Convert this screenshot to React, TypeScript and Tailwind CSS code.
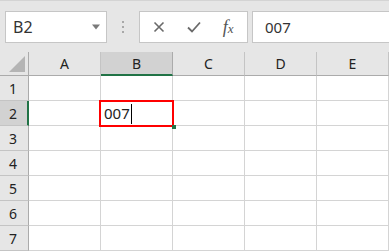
import { Fragment } from "react";

const cols = ["A", "B", "C", "D", "E"];
const rows = [1, 2, 3, 4, 5, 6, 7];

export default function App() {
  return (
    <div
      className="w-[389px] h-[252px] overflow-hidden bg-white"
      style={{ fontFamily: '"Noto Sans", "Liberation Sans", sans-serif' }}
    >
      {/* formula bar */}
      <div className="h-[52px] bg-[#e6e6e6] border-t border-[#d4d4d4] flex items-start pt-[10px] pl-[5px]">
        <div className="w-[102px] h-[32px] bg-white border border-[#c6c6c6] flex items-center justify-between pl-[7px] pr-[5px]">
          <span className="text-[16px] text-[#333]">B2</span>
          <svg width="10" height="6" viewBox="0 0 10 6">
            <path d="M1 0.5 L9 0.5 L5 5.5 Z" fill="#7a7a7a" />
          </svg>
        </div>
        <div className="w-[32px] h-[32px] flex flex-col items-center justify-center gap-[3px]">
          <span className="w-[2px] h-[2px] bg-[#a8a8a8]" />
          <span className="w-[2px] h-[2px] bg-[#a8a8a8]" />
          <span className="w-[2px] h-[2px] bg-[#a8a8a8]" />
        </div>
        <div className="w-[109px] h-[32px] bg-white border border-[#c6c6c6] flex items-center">
          <div className="w-[36px] flex justify-center pl-[2px]">
            <svg width="12" height="12" viewBox="0 0 12 12">
              <path d="M1.5 1.5 L10.5 10.5 M10.5 1.5 L1.5 10.5" stroke="#6a6a6a" strokeWidth="1.6" />
            </svg>
          </div>
          <div className="w-[36px] flex justify-center">
            <svg width="14" height="12" viewBox="0 0 14 12">
              <path d="M1 6.5 L5 10.5 L13 1.5" stroke="#6a6a6a" strokeWidth="1.8" fill="none" />
            </svg>
          </div>
          <div className="w-[36px] flex justify-center pr-[2px]">
            <span
              className="text-[18px] italic text-[#555] leading-none"
              style={{ fontFamily: '"Liberation Serif", serif' }}
            >
              f<span className="text-[13px]">x</span>
            </span>
          </div>
        </div>
        <div className="ml-[4px] flex-1 h-[32px] bg-white border border-[#c6c6c6] border-r-0 flex items-center pl-[12px]">
          <span className="text-[15px] text-[#333]">007</span>
        </div>
      </div>

      {/* grid */}
      <div className="grid grid-cols-[29px_repeat(5,72px)]">
        <div className="h-[24px] bg-[#e6e6e6] border-r border-b border-[#ababab] relative">
          <svg className="absolute right-[3px] bottom-[3px]" width="16" height="16" viewBox="0 0 16 16">
            <path d="M16 0 L16 16 L0 16 Z" fill="#b4b4b4" />
          </svg>
        </div>
        {cols.map((c) => (
          <div
            key={c}
            className={
              c === "B"
                ? "h-[24px] bg-[#d2d2d2] border-r border-b-2 border-r-[#ababab] border-b-[#217346] flex items-center justify-center text-[14px] text-[#222]"
                : "h-[24px] bg-[#e6e6e6] border-r border-b border-r-[#c4c4c4] border-b-[#ababab] flex items-center justify-center text-[14px] text-[#222]"
            }
          >
            {c}
          </div>
        ))}
        {rows.map((r) => (
          <Fragment key={r}>
            <div
              className={
                r === 2
                  ? "h-[25px] bg-[#d2d2d2] border-r-2 border-b border-r-[#217346] border-b-[#c4c4c4] flex items-center pl-[9px] text-[14px] text-[#222]"
                  : "h-[25px] bg-[#e6e6e6] border-r border-b border-r-[#ababab] border-b-[#c4c4c4] flex items-center pl-[9px] text-[14px] text-[#222]"
              }
            >
              {r}
            </div>
            {cols.map((c) => (
              <div key={c} className="h-[25px] border-r border-b border-[#d4d4d4] relative">
                {r === 2 && c === "B" && (
                  <div className="absolute left-[-2px] top-[-1px] w-[75px] h-[27px] border-2 border-[#ff0000] z-10 flex items-center pl-[3px]">
                    <span className="text-[15px] text-[#222] leading-none">007</span>
                    <span className="w-[1px] h-[20px] bg-black ml-[1px]" />
                    <span className="absolute right-[-4px] bottom-[-4px] w-[4px] h-[4px] bg-[#217346]" />
                  </div>
                )}
              </div>
            ))}
          </Fragment>
        ))}
      </div>
    </div>
  );
}
